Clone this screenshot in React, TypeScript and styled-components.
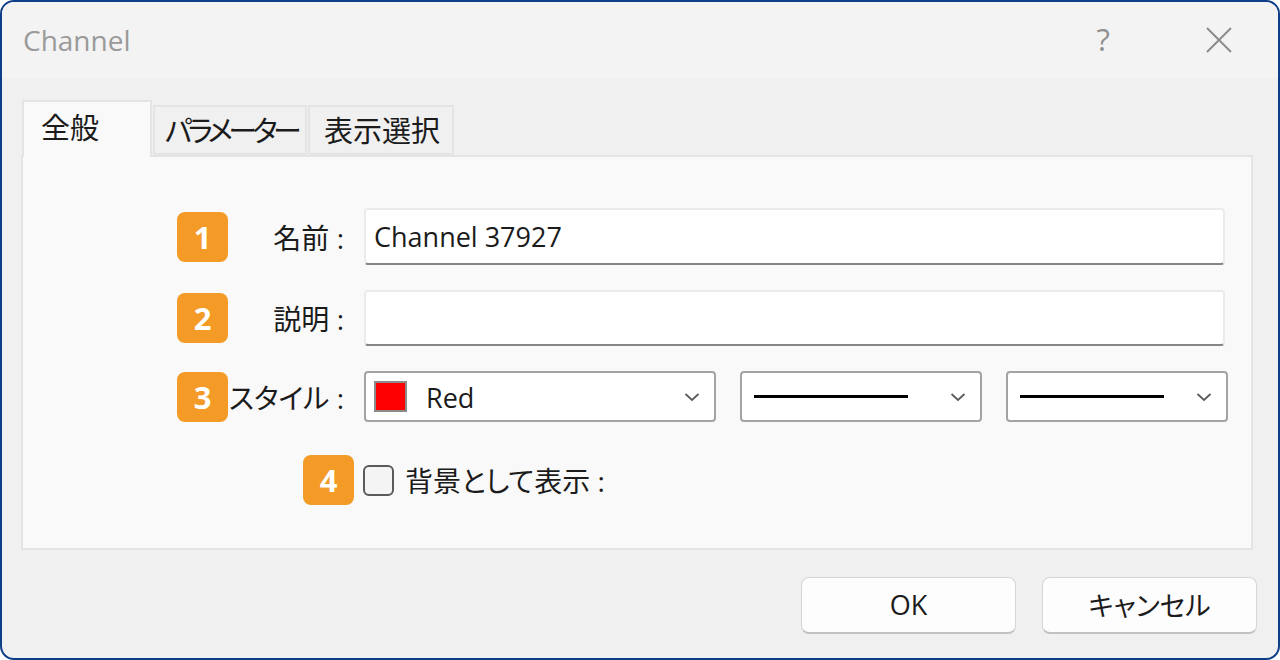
import styled, { createGlobalStyle } from "styled-components";

const GlobalStyle = createGlobalStyle`
  html, body {
    margin: 0;
    padding: 0;
    background: #ffffff;
    overflow: hidden;
  }
  * {
    box-sizing: border-box;
  }
`;

const fontStack = `"Open Sans", "Noto Sans CJK JP", sans-serif`;

const Window = styled.div`
  width: 1280px;
  height: 660px;
  border: 2px solid #0d3f88;
  border-radius: 14px;
  background: #f0f0f0;
  overflow: hidden;
  display: flex;
  flex-direction: column;
  font-family: ${fontStack};
  font-feature-settings: "palt";
  color: #1b1b1b;
`;

const TitleBar = styled.div`
  height: 76px;
  flex: none;
  background: #f3f3f3;
  display: flex;
  align-items: center;
  padding-left: 21px;
  padding-right: 45px;
`;

const Title = styled.div`
  flex: 1;
  font-size: 28px;
  color: #9a9a9a;
`;

const HelpButton = styled.div`
  color: #8f8f8f;
  font-size: 31px;
  margin-right: 95px;
  margin-top: -2px;
`;

const CloseButton = styled.div`
  display: flex;
  align-items: center;
`;

const Body = styled.div`
  flex: 1;
  display: flex;
  flex-direction: column;
  padding: 22px 25px 0 19px;
`;

const TabStrip = styled.div`
  display: flex;
  align-items: flex-end;
  height: 55px;
  padding-left: 1px;
  gap: 1px;
`;

const Tab = styled.div<{ $active?: boolean; $w: number; $pad: number; $tight?: boolean }>`
  width: ${(p) => p.$w}px;
  height: ${(p) => (p.$active ? 57 : 50)}px;
  margin-bottom: ${(p) => (p.$active ? -2 : 0)}px;
  border: 2px solid #e4e4e4;
  border-bottom: ${(p) => (p.$active ? "none" : "2px solid #e4e4e4")};
  background: ${(p) => (p.$active ? "#f9f9f9" : "#f0f0f0")};
  position: relative;
  z-index: ${(p) => (p.$active ? 1 : 0)};
  display: flex;
  align-items: center;
  padding-left: ${(p) => p.$pad}px;
  font-size: 29px;
  letter-spacing: ${(p) => (p.$tight ? "-4.5px" : "0")};
  white-space: nowrap;
  overflow: hidden;
  padding-bottom: ${(p) => (p.$active ? 8 : 2)}px;
`;

const Panel = styled.div`
  height: 395px;
  border: 2px solid #e4e4e4;
  background: #f9f9f9;
  padding: 51px 0 0 154px;
  display: flex;
  flex-direction: column;
`;

const Row = styled.div<{ $h: number; $gap: number; $indent?: number }>`
  display: flex;
  align-items: center;
  height: ${(p) => p.$h}px;
  margin-bottom: ${(p) => p.$gap}px;
  margin-left: ${(p) => p.$indent ?? 0}px;
`;

const Badge = styled.div`
  width: 51px;
  height: 50px;
  flex: none;
  border-radius: 8px;
  background: #f39b26;
  color: #ffffff;
  font-family: "Open Sans", sans-serif;
  font-weight: 700;
  font-size: 31px;
  display: flex;
  align-items: center;
  justify-content: center;
`;

const Label = styled.div`
  width: 116px;
  flex: none;
  text-align: right;
  font-size: 28px;
  margin-right: 20px;
  white-space: nowrap;
`;

const TextField = styled.div<{ $h: number }>`
  width: 861px;
  height: ${(p) => p.$h}px;
  background: #ffffff;
  border: 2px solid #ebebeb;
  border-bottom: 2px solid #858585;
  border-radius: 4px;
  display: flex;
  align-items: center;
  padding-left: 8px;
  font-size: 27px;
  color: #1b1b1b;
`;

const Select = styled.div<{ $w: number }>`
  width: ${(p) => p.$w}px;
  height: 51px;
  background: #ffffff;
  border: 2px solid #a3a3a3;
  border-radius: 4px;
  display: flex;
  align-items: center;
  padding: 0 14px 0 8px;
  margin-right: 24px;
  font-size: 27px;
  &:last-child {
    margin-right: 0;
  }
`;

const Swatch = styled.div<{ $color: string }>`
  width: 33px;
  height: 31px;
  border: 2px solid #8b8b8b;
  background: ${(p) => p.$color};
  margin-right: 19px;
  flex: none;
`;

const SelectText = styled.div`
  flex: 1;
  margin-top: 2px;
`;

const LineSample = styled.div<{ $w: number }>`
  width: ${(p) => p.$w}px;
  height: 3px;
  background: #000000;
  margin-left: 4px;
`;

const Spacer = styled.div`
  flex: 1;
`;

const Checkbox = styled.div`
  width: 31px;
  height: 31px;
  border: 2px solid #5a5a5a;
  border-radius: 6px;
  background: #f4f4f4;
  margin-left: 9px;
  margin-right: 11px;
  flex: none;
`;

const CheckLabel = styled.div`
  font-size: 28px;
`;

const Footer = styled.div`
  display: flex;
  justify-content: flex-end;
  gap: 26px;
  padding-top: 27px;
  margin-right: -4px;
`;

const Button = styled.div`
  width: 215px;
  height: 57px;
  background: #fdfdfd;
  border: 1px solid #d6d6d6;
  border-bottom: 2px solid #c2c2c2;
  border-radius: 8px;
  display: flex;
  align-items: center;
  justify-content: center;
  font-size: 27px;
  padding-bottom: 2px;
`;

function Chevron() {
  return (
    <svg width="16" height="10" viewBox="0 0 16 10">
      <path d="M1.5 2 L8 8 L14.5 2" fill="none" stroke="#5c5c5c" strokeWidth="1.8" />
    </svg>
  );
}

function CloseIcon() {
  return (
    <svg width="28" height="28" viewBox="0 0 28 28">
      <path d="M2 2 L26 26 M26 2 L2 26" stroke="#8c8c8c" strokeWidth="2" />
    </svg>
  );
}

export default function App() {
  return (
    <>
      <GlobalStyle />
      <Window>
        <TitleBar>
          <Title>Channel</Title>
          <HelpButton>?</HelpButton>
          <CloseButton>
            <CloseIcon />
          </CloseButton>
        </TitleBar>
        <Body>
          <TabStrip>
            <Tab $active $w={130} $pad={17}>全般</Tab>
            <Tab $w={154} $pad={10} $tight>パラメーター</Tab>
            <Tab $w={146} $pad={14}>表示選択</Tab>
          </TabStrip>
          <Panel>
            <Row $h={57} $gap={25}>
              <Badge>1</Badge>
              <Label>名前 :</Label>
              <TextField $h={57}>Channel 37927</TextField>
            </Row>
            <Row $h={56} $gap={25}>
              <Badge>2</Badge>
              <Label>説明 :</Label>
              <TextField $h={56} />
            </Row>
            <Row $h={51} $gap={33}>
              <Badge>3</Badge>
              <Label>スタイル :</Label>
              <Select $w={352}>
                <Swatch $color="#ff0000" />
                <SelectText>Red</SelectText>
                <Chevron />
              </Select>
              <Select $w={242}>
                <LineSample $w={154} />
                <Spacer />
                <Chevron />
              </Select>
              <Select $w={222}>
                <LineSample $w={144} />
                <Spacer />
                <Chevron />
              </Select>
            </Row>
            <Row $h={50} $gap={0} $indent={126}>
              <Badge>4</Badge>
              <Checkbox />
              <CheckLabel>背景として表示 :</CheckLabel>
            </Row>
          </Panel>
          <Footer>
            <Button>OK</Button>
            <Button>キャンセル</Button>
          </Footer>
        </Body>
      </Window>
    </>
  );
}
